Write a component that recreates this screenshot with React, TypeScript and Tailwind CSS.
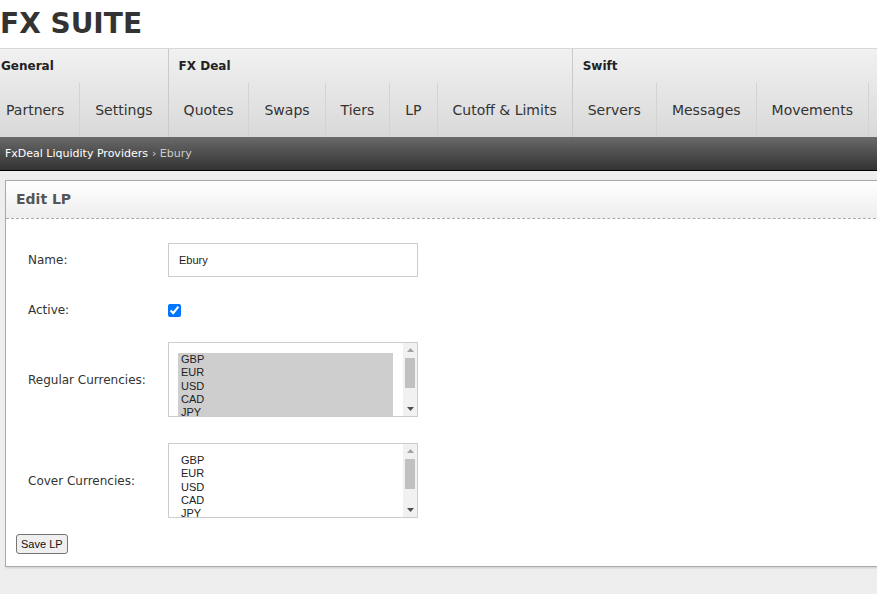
import React from "react";

const groups = [
  {label: "General", items: ["Partners", "Settings"], first: true},
  {label: "FX Deal", items: ["Quotes", "Swaps", "Tiers", "LP", "Cutoff & Limits"]},
  {label: "Swift", items: ["Servers", "Messages", "Movements", ""]},
];

// only the rows that show in the list box
const currencies = ["GBP", "EUR", "USD", "CAD", "JPY"];

function NavBar() {
  return (
    <div className="flex h-[88px] overflow-hidden whitespace-nowrap bg-gradient-to-b from-[#f1f1f1] to-[#d9d9d9]">
      {groups.map((group) => (
        <div
          key={group.label}
          className={`flex shrink-0 flex-col border-r border-[#cacaca] ${group.first ? "-ml-[9px]" : ""}`}
        >
          <div className="flex h-[34px] items-center px-[10px] text-[12px] font-bold text-[#222]">
            {group.label}
          </div>
          <div className="flex h-[54px]">
            {group.items.map((item, i) => (
              <div
                key={item || i}
                className={`flex min-w-[40px] items-center px-[15px] text-[14px] text-[#333] ${
                  i < group.items.length - 1 ? "border-r border-[#d3d3d3]" : ""
                }`}
              >
                {item}
              </div>
            ))}
          </div>
        </div>
      ))}
    </div>
  );
}

function Scrollbar() {
  return (
    <div className="flex w-[14px] shrink-0 flex-col bg-[#f1f1f1]">
      <div className="flex h-[14px] items-center justify-center">
        <svg width="7" height="4" viewBox="0 0 7 4">
          <polygon points="0,4 3.5,0 7,4" fill="#a3a3a3" />
        </svg>
      </div>
      <div className="flex-1 px-[2px] pt-[1px]">
        <div className="h-[30px] bg-[#c1c1c1]" />
      </div>
      <div className="flex h-[14px] items-center justify-center">
        <svg width="7" height="4" viewBox="0 0 7 4">
          <polygon points="0,0 7,0 3.5,4" fill="#505050" />
        </svg>
      </div>
    </div>
  );
}

function CurrencyList({selected}: {selected: boolean}) {
  return (
    <div
      className="flex h-[75px] w-[250px] border border-[#cccccc] bg-white text-[11px] text-[#222]"
      style={{fontFamily: '"Liberation Sans", Arial, sans-serif'}}
    >
      <div className="flex-1 overflow-hidden py-[10px] pl-[9px] pr-[10px]">
        {currencies.map((c) => (
          <div
            key={c}
            className={`h-[13.25px] pl-[3px] leading-[13.25px] ${selected ? "bg-[#cecece]" : ""}`}
          >
            {c}
          </div>
        ))}
      </div>
      <Scrollbar />
    </div>
  );
}

function Row({label, children, className}: {label: string; children: React.ReactNode; className?: string}) {
  return (
    <div className={`flex items-center ${className ?? ""}`}>
      <div className="w-[140px] shrink-0 text-[12px] text-[#333]">{label}</div>
      {children}
    </div>
  );
}

export default function App() {
  return (
    <div
      className="h-[594px] w-[877px] overflow-hidden bg-[#eeeeee]"
      style={{fontFamily: '"DejaVu Sans", Verdana, sans-serif'}}
    >
      {/* Title */}
      <div className="flex h-[49px] items-center border-b border-[#d8d8d8] bg-white">
        <h1 className="text-[28px] font-bold leading-none text-[#333]">FX SUITE</h1>
      </div>

      <NavBar />

      {/* Breadcrumb */}
      <div className="flex h-[34px] items-center border-b border-black bg-gradient-to-b from-[#6a6a6a] to-[#333333] px-[5px] pt-[1px] text-[11px] text-white">
        FxDeal Liquidity Providers
        <span className="ml-[4px] text-[#cccccc]">› Ebury</span>
      </div>

      {/* Panel */}
      <div className="pt-[9px]">
        <div className="-mr-[40px] ml-[5px] border border-[#aaaaaa] bg-white pb-[12px] shadow-[1px_1px_2px_rgba(0,0,0,0.15)]">
          <div className="flex h-[38px] items-center border-b border-dashed border-[#aaaaaa] bg-gradient-to-b from-white to-[#eeeeee] px-[10px] text-[14px] font-bold text-[#555]">
            Edit LP
          </div>

          <div className="pl-[22px] pt-[24px]">
            <Row label="Name:">
              <input
                defaultValue="Ebury"
                className="h-[34px] w-[250px] border border-[#cccccc] px-[10px] text-[11px] text-[#222] outline-none"
                style={{fontFamily: '"Liberation Sans", Arial, sans-serif'}}
              />
            </Row>
            <Row label="Active:" className="mt-[23px] h-[20px]">
              <input type="checkbox" defaultChecked className="m-0 h-[13px] w-[13px]" />
            </Row>
            <Row label="Regular Currencies:" className="mt-[22px]">
              <CurrencyList selected />
            </Row>
            <Row label="Cover Currencies:" className="mt-[26px]">
              <CurrencyList selected={false} />
            </Row>
          </div>

          <div className="pl-[10px] pt-[16px]">
            <button
              className="block h-[20px] rounded-[3px] border border-[#767676] bg-[#efefef] px-[4px] text-[11px] text-[#111]"
              style={{fontFamily: '"Liberation Sans", Arial, sans-serif'}}
            >
              Save LP
            </button>
          </div>
        </div>
      </div>
    </div>
  );
}
